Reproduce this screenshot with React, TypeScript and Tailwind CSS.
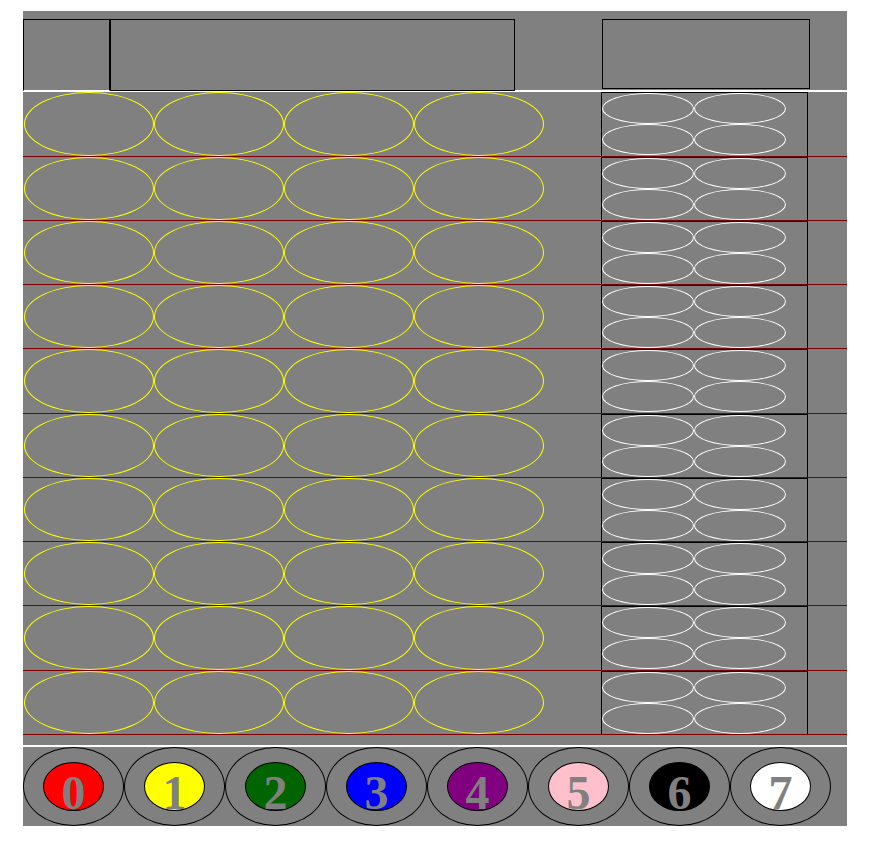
import React from "react";

const rowHeights = [
  "h-[64px]",
  "h-[63px]",
  "h-[63px]",
  "h-[63px]",
  "h-[64px]",
  "h-[63px]",
  "h-[63px]",
  "h-[63px]",
  "h-[64px]",
  "h-[63px]",
];

const pegs = [
  { n: 0, bg: "bg-[#ff0000]" },
  { n: 1, bg: "bg-[#ffff00]" },
  { n: 2, bg: "bg-[#006400]" },
  { n: 3, bg: "bg-[#0000ff]" },
  { n: 4, bg: "bg-[#800080]" },
  { n: 5, bg: "bg-[#ffc0cb]" },
  { n: 6, bg: "bg-[#000000]" },
  { n: 7, bg: "bg-[#ffffff]" },
];

const GuessRow: React.FC<{ height: string }> = ({ height }) => {
  return (
    <div>
      <div className={`flex items-stretch ${height}`}>
        <div className="flex pl-[1px]">
          {[0, 1, 2, 3].map((i) => (
            <div
              key={i}
              className="w-[130px] h-full rounded-[50%] border border-[#ffff00]"
            />
          ))}
        </div>
        <div className="ml-[57px] w-[207px] h-full border-x border-t border-black grid grid-cols-[92px_92px] content-start">
          {[0, 1, 2, 3].map((i) => (
            <div
              key={i}
              className="w-[92px] h-[31px] rounded-[50%] border border-white"
            />
          ))}
        </div>
      </div>
      <div className="h-[1px] bg-[#800000]" />
    </div>
  );
};

export default function App() {
  return (
    <div className="pl-[23px] pt-[11px] pb-[20px] font-['Liberation_Serif',serif]">
      <div className="w-[824px] bg-[#808080]">
        {/* header */}
        <div className="h-[81px] flex pt-[8px] border-b-2 border-white">
          <div className="w-[87px] h-[72px] border border-black border-b-white" />
          <div className="w-[405px] h-[72px] border border-black" />
          <div className="ml-[87px] w-[208px] h-[70px] border border-black" />
        </div>

        {/* board */}
        <div>
          {rowHeights.map((h, i) => (
            <GuessRow key={i} height={h} />
          ))}
        </div>

        <div className="h-[10px]" />

        {/* palette */}
        <div className="h-[81px] flex border-t-2 border-white">
          {pegs.map((p) => (
            <div
              key={p.n}
              className="w-[101px] h-[79px] rounded-[50%] border border-black flex items-center justify-center"
            >
              <div
                className={`w-[61px] h-[49px] rounded-[50%] border border-black text-center leading-none pt-[6px] text-[48px] font-bold text-[#808080] ${p.bg}`}
              >
                {p.n}
              </div>
            </div>
          ))}
        </div>
      </div>
    </div>
  );
}
